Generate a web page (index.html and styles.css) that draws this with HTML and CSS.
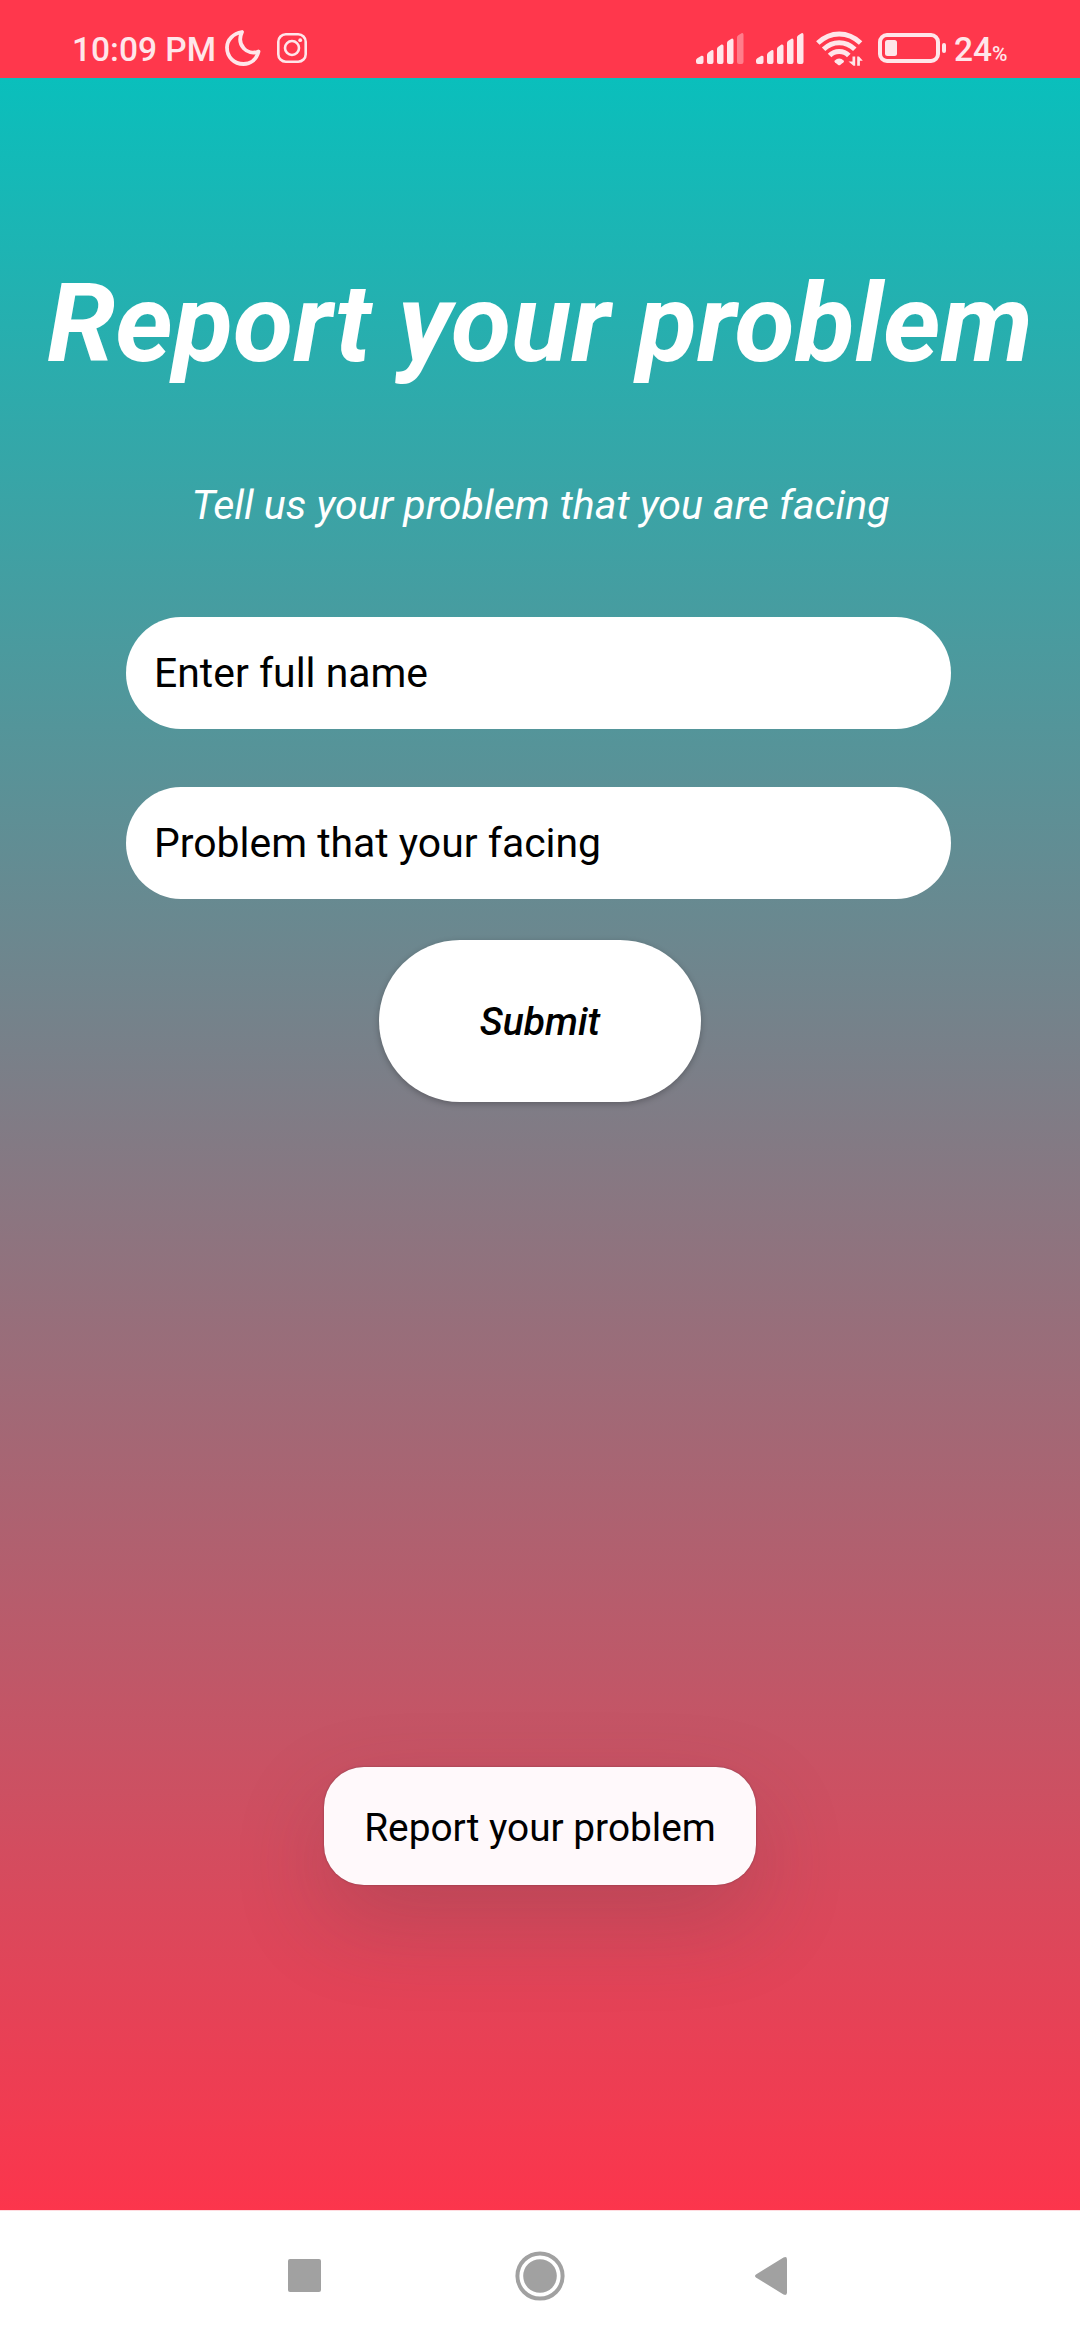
FILE: index.html
```html
<!DOCTYPE html>
<html lang="en">
<head>
<meta charset="utf-8">
<title>Report your problem</title>
<link rel="stylesheet" href="styles.css">
</head>
<body>
<header class="status">
  <span class="status-time">10:09 PM</span>
  <svg class="icon-moon" width="36" height="36" viewBox="0 0 36 36"><path d="M17 2C8.500 3.500 2 9.500 2 17.500C2 27 9 34 18.500 34C25.500 34 31.500 29.500 33.500 21.500C22 26 11 15 17 2Z"/></svg>
  <svg class="icon-camera" width="30" height="30" viewBox="0 0 30 30"><rect x="1.300" y="1.300" width="27.400" height="27.400" rx="7.500"/><circle cx="15" cy="15" r="7"/><circle class="dot" cx="23.200" cy="7.200" r="1.900"/></svg>
  <svg class="icon-signal" width="48" height="31" viewBox="0 0 48 31"><path d="M0 27.500Q0 26 1.300 25.200L5.500 22.700Q7.500 22.500 7.500 24V29Q7.500 31 5.500 31H2Q0 31 0 29ZM11 22Q11 20.500 12.300 19.500L15.500 17.200Q17.500 16.500 17.500 18.500V29Q17.500 31 15.500 31H13Q11 31 11 29ZM21 16Q21 14.500 22.300 13.700L25.500 11.500Q27.500 11 27.500 13V29Q27.500 31 25.500 31H23Q21 31 21 29ZM31 10Q31 8.500 32.300 7.700L35.500 5.700Q37.500 5.200 37.500 7.200V29Q37.500 31 35.500 31H33Q31 31 31 29Z"/><path class="faint" d="M41 4.500Q41 3 42.300 2.200L45.500.2Q47.500-.3 47.500 1.700V29Q47.500 31 45.500 31H43Q41 31 41 29Z"/></svg>
  <svg class="icon-signal second" width="48" height="31" viewBox="0 0 48 31"><path d="M0 27.500Q0 26 1.300 25.200L5.500 22.700Q7.500 22.500 7.500 24V29Q7.500 31 5.500 31H2Q0 31 0 29ZM11 22Q11 20.500 12.300 19.500L15.500 17.200Q17.500 16.500 17.500 18.500V29Q17.500 31 15.500 31H13Q11 31 11 29ZM21 16Q21 14.500 22.300 13.700L25.500 11.500Q27.500 11 27.500 13V29Q27.500 31 25.500 31H23Q21 31 21 29ZM31 10Q31 8.500 32.300 7.700L35.500 5.700Q37.500 5.200 37.500 7.200V29Q37.500 31 35.500 31H33Q31 31 31 29ZM41 4.500Q41 3 42.300 2.200L45.500.2Q47.500-.3 47.500 1.700V29Q47.500 31 45.500 31H43Q41 31 41 29Z"/></svg>
  <svg class="icon-wifi" width="47" height="36" viewBox="0 0 47 36"><g class="arc"><path d="M1.800 12Q11.500 3 23.200 3T44.600 12"/><path d="M7.600 18.300Q14.500 11.700 23.200 11.700T38.800 18.300"/><path d="M13.600 24.500Q17.500 20.400 23.200 20.400T32.800 24.500"/></g><path class="solid" d="M18.500 29.700Q23.200 25.500 27.900 29.700Q28.300 30.500 27.500 31.200L24.200 34Q23.200 34.700 22.200 34L18.900 31.200Q18.100 30.500 18.500 29.700Z"/><path class="solid" d="M36.500 25.500H39.200V34.800H37.500L32.500 30.500H36.500ZM41.200 34.800V25.500H43L46.800 29.800H43.900V34.800Z"/></svg>
  <svg class="icon-battery" width="68" height="30" viewBox="0 0 68 30"><rect class="case" x="2" y="2" width="58" height="26" rx="7"/><rect x="7" y="7" width="12" height="16" rx="2.500"/><rect x="64" y="10" width="4" height="10" rx="2"/></svg>
  <span class="status-level">24<small class="status-percent">%</small></span>
</header>
<main class="screen">
  <h1 class="title">Report your problem</h1>
  <p class="subtitle">Tell us your problem that you are facing</p>
  <form class="form">
    <div class="field">Enter full name</div>
    <div class="field">Problem that your facing</div>
    <button class="submit" type="button">Submit</button>
  </form>
  <div class="toast">Report your problem</div>
</main>
<nav class="nav">
  <svg width="33" height="33" viewBox="0 0 33 33"><rect width="33" height="33" rx="2"/></svg>
  <svg class="nav-home" width="50" height="50" viewBox="0 0 50 50"><circle class="ring" cx="25" cy="25" r="22.600"/><circle cx="25" cy="25" r="16.800"/></svg>
  <svg width="32" height="38" viewBox="0 0 32 38"><path d="M1 17.500Q-1 19 1 20.500L28.500 37.500Q32 39 32 35.500V2.500Q32-1 28.500.5Z"/></svg>
</nav>
</body>
</html>
```
FILE: styles.css
```css
* { box-sizing: border-box; }
body {
  margin: 0;
  width: 1080px;
  height: 2340px;
  display: flex;
  flex-direction: column;
  overflow: hidden;
  font-family: Roboto, sans-serif;
}
svg { display: block; flex: none; }
.status {
  height: 78px;
  display: flex;
  align-items: flex-start;
  padding: 29px 0 0 72px;
  background: #ff374c;
  color: #ffe6ea;
  fill: #ffe6ea;
  font-size: 33.5px;
  font-weight: 500;
  line-height: 42px;
}
.status-time { width: 153px; white-space: nowrap; }
.icon-moon { margin: 1px 0 0; fill: none; stroke: #ffe6ea; stroke-width: 3.8; stroke-linejoin: round; }
.icon-camera { margin: 4px 0 0 16px; fill: none; stroke: #ffe6ea; stroke-width: 2.6; }
.icon-camera .dot { fill: #ffe6ea; stroke: none; }
.icon-signal { margin: 4px 0 0 389px; }
.icon-signal.second { margin-left: 12px; }
.faint { opacity: .4; }
.icon-wifi { margin: 2px 0 0 12px; }
.arc { fill: none; stroke: #ffe6ea; stroke-width: 5; }
.icon-battery { margin: 4px 0 0 15px; }
.icon-battery .case { fill: none; stroke: #ffe6ea; stroke-width: 4; }
.status-level { margin-left: 8px; white-space: nowrap; }
.status-percent { font-size: 21px; }

.screen {
  height: 2132px;
  display: flex;
  flex-direction: column;
  align-items: center;
  padding-top: 181px;
  background: linear-gradient(#0abfbc, #fc354c);
}
.title {
  margin: 0;
  color: #fff;
  font-size: 110px;
  font-weight: 700;
  font-style: italic;
  line-height: 130px;
  white-space: nowrap;
}
.subtitle {
  margin: 91px 0 87px;
  padding-left: 1px;
  color: #fff;
  font-size: 41.1px;
  font-style: italic;
  line-height: 50px;
  white-space: nowrap;
}
.form { width: 825px; margin-right: 3px; display: flex; flex-direction: column; }
.field {
  height: 112px;
  margin-bottom: 58px;
  padding: 0 28px;
  border-radius: 55px / 56px;
  background: #fff;
  color: #000;
  font-size: 40.9px;
  line-height: 112px;
}
.submit {
  width: 322px;
  height: 162px;
  margin: -17px 0 0 253px;
  padding: 3px 0 0;
  border: 0;
  border-radius: 81px;
  background: #fff;
  color: #000;
  box-shadow: 0 2px 6px rgba(0, 0, 0, .25);
  font: italic 500 39px/159px Roboto, sans-serif;
}
.toast {
  width: 432px;
  height: 118px;
  margin-top: 665px;
  border-radius: 40px;
  background: #fff9fb;
  color: #000;
  box-shadow: 0 0 2px rgba(70, 40, 50, .5), 0 36px 90px rgba(80, 60, 70, .22);
  font-size: 38.8px;
  line-height: 121px;
  text-align: center;
  white-space: nowrap;
}
.nav {
  height: 130px;
  display: flex;
  align-items: center;
  padding-left: 288px;
  border-top: 1px solid #ffdde1;
  background: #fff;
  fill: #a1a1a1;
}
.nav-home { margin: 0 190px 0 194px; }
.nav .ring { fill: none; stroke: #a1a1a1; stroke-width: 4; }
```
